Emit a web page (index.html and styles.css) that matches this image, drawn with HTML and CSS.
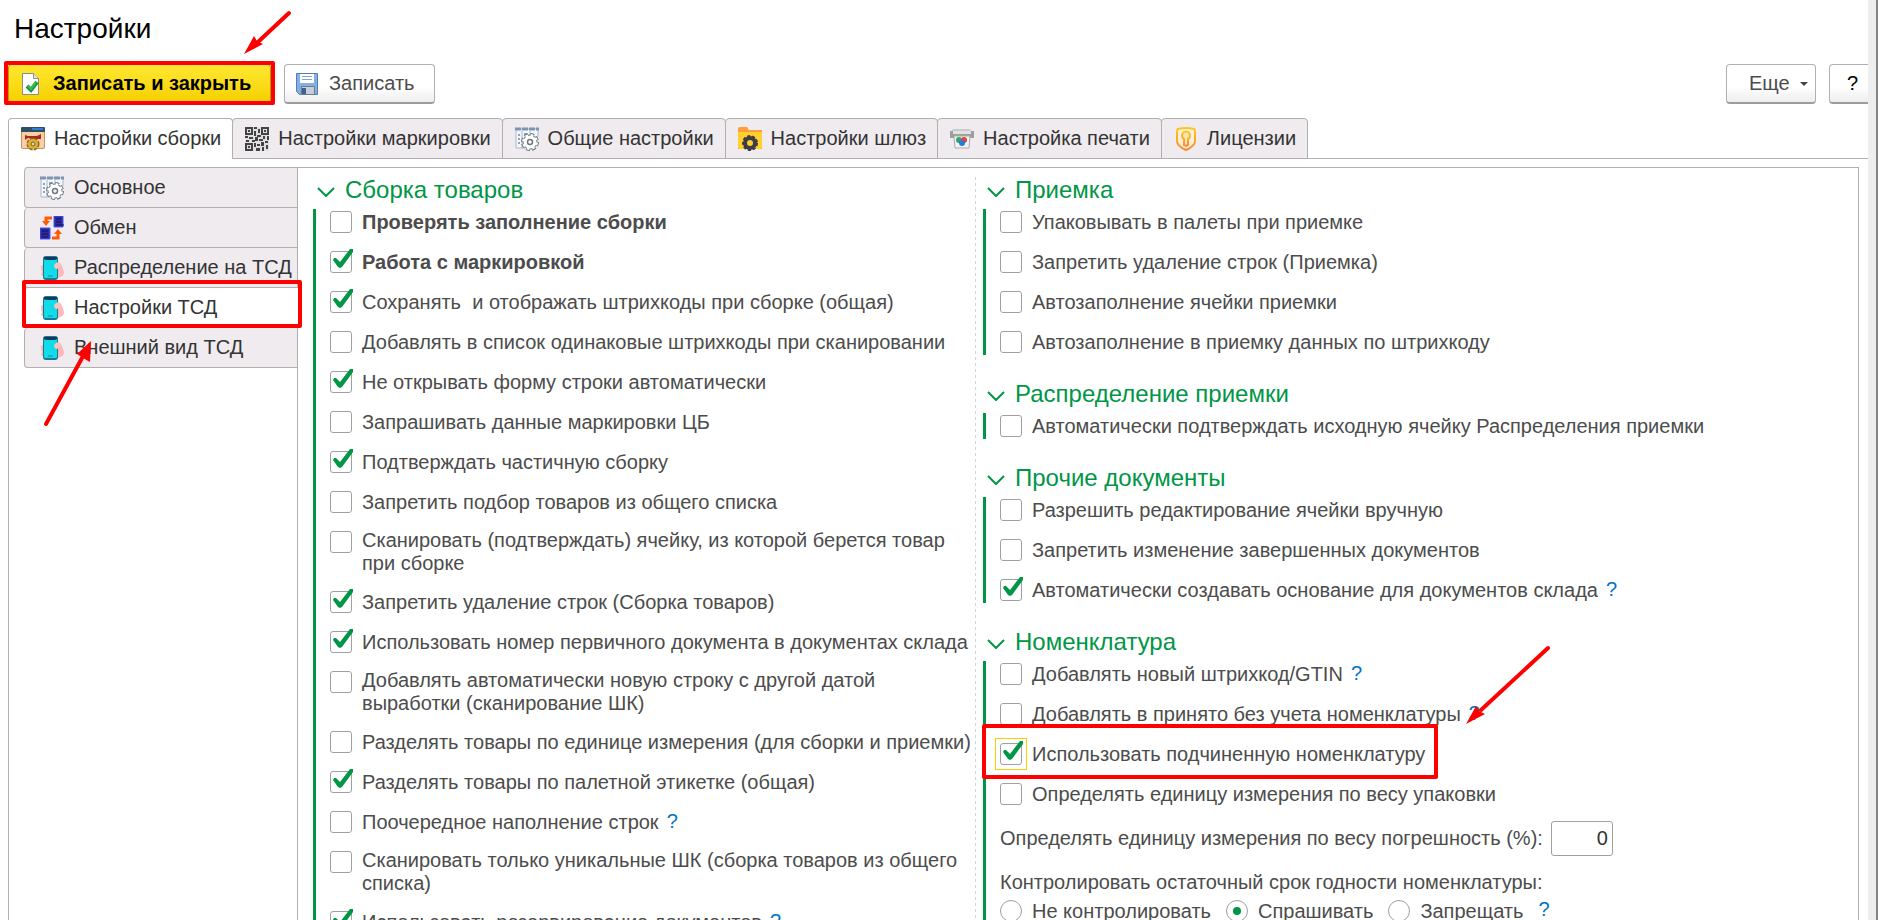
FILE: index.html
```html
<!DOCTYPE html>
<html lang="ru">

<head>
    <meta charset="UTF-8">
    <meta name="viewport" content="width=device-width, initial-scale=1.0">
    <title>Настройки</title>
    <link rel="stylesheet" href="styles.css">
</head>

<body>
    <!-- Общие иконки -->
    <svg width="0" height="0" class="sprite">
        <symbol id="icon-form" viewBox="0 0 24 24">
            <path d="M1 2h22v8H10v11H1z" fill="#f4f7fb" stroke="#a9b8cf" />
            <path d="M0 2h24" stroke="#7f93b5" stroke-width="3" stroke-dasharray="6 1" />
            <path d="M7 4v17M15 4v4" stroke="#a9b8cf" />
            <path d="M3 8h2M3 12h2M3 16h2M9 7h3" stroke="#8fa3bf" stroke-width="2" />
            <circle cx="15" cy="15" r="7" fill="none" stroke="#6e7780" stroke-width="4" stroke-dasharray="3.6 1.9" />
            <circle cx="15" cy="15" r="7" fill="#fff" stroke="#6e7780" stroke-width="1" />
            <circle cx="15" cy="15" r="7" fill="none" stroke="#fff" stroke-width="2" stroke-dasharray="2.6 2.9" stroke-dashoffset="-0.5" />
            <circle cx="15" cy="15" r="2.5" fill="#fff" stroke="#6e7780" stroke-width="1.5" />
        </symbol>
        <symbol id="icon-phone" viewBox="0 0 24 24">
            <path d="M1 10l3-2v13l-3-2 1-3-1-3z" fill="#fbb9b9" />
            <path d="M16 6q5 0 6 4l2 6q0 4-4 5l-4 2z" fill="#fbb9b9" />
            <rect x="3" y="0" width="15" height="24" rx="3" fill="#17798f" />
            <rect x="4" y="3" width="13" height="19" rx="1" fill="#12dcea" />
            <path d="M4 1h13v2l-2 1H6L4 3z" fill="#123a5c" />
            <path d="M8 20h5" stroke="#0b8fa5" />
            <path d="M14 9q3-4 6-2l1 3-4 3q-3 0-3-4z" fill="#fbc4c1" />
        </symbol>
        <symbol id="icon-chevron" viewBox="0 0 18 10">
            <path d="M1 1l8 8 8-8" fill="none" stroke="#009646" stroke-width="2" />
        </symbol>
    </svg>

    <div class="window">
        <h1>Настройки</h1>

        <div class="toolbar">
            <div class="marked">
                <button type="button" class="btn btn-primary">
                    <svg class="icon" viewBox="0 0 24 24">
                        <path d="M3.5 1.5h11l5 5v16h-16z" fill="#fff" stroke="#8a8f80" />
                        <path d="M14.500 1.500v5h5" fill="#e8e8e8" stroke="#8a8f80" />
                        <path d="M8 14l4 4 6-8" fill="none" stroke="#15953a" stroke-width="4" />
                        <path d="M9 14l3 3 5-7" fill="none" stroke="#35c04c" stroke-width="2" />
                    </svg>
                    Записать и закрыть
                </button>
                <span class="frame frame-save"></span>
                <svg class="arrow arrow-save" viewBox="0 0 48 46">
                    <path d="M45 4L14 33" stroke="#f00" stroke-width="4" stroke-linecap="round" />
                    <path d="M0 45L10 27l3 5 6 3z" fill="#f00" />
                </svg>
            </div>
            <button type="button" class="btn btn-write">
                <svg class="icon" viewBox="0 0 24 24">
                    <path d="M1.500 1.500h21v21h-18l-3-3z" fill="#86aede" stroke="#4d7fb8" />
                    <path d="M5 2h14v9H5z" fill="#fff" />
                    <path d="M7 4.500h10M7 7.500h10" stroke="#7fa5d2" />
                    <path d="M6.500 14.500h13v8h-13z" fill="#c9ced4" stroke="#6b7c92" />
                    <path d="M7 16h4v6H7z" fill="#3b6294" />
                </svg>
                Записать
            </button>
            <button type="button" class="btn btn-more">
                Еще
                <svg width="8" height="4" viewBox="0 0 8 4"><path d="M0 0h8L4 4z" fill="#444" /></svg>
            </button>
            <button type="button" class="btn btn-help">?</button>
        </div>

        <div class="tabs">
            <button type="button" class="tab active">
                <svg class="icon" viewBox="0 0 24 24">
                    <rect x="0" y="1" width="24" height="21" rx="2" fill="#c98f5c" />
                    <rect x="1" y="5" width="22" height="16" rx="1" fill="#f9cfa6" />
                    <rect x="0" y="0" width="24" height="5" rx="1" fill="#2f4f66" />
                    <path d="M11 2h11" stroke="#2f80c8" stroke-width="2" />
                    <path d="M4 8l3 1h9l4-2v5h-6l-7-1-3 2z" fill="#a82a1c" />
                    <circle cx="12" cy="17" r="5" fill="#e0b030" stroke="#8a6a1a" stroke-width="3" stroke-dasharray="3 1" />
                    <circle cx="12" cy="17" r="5" fill="#e0b030" />
                    <circle cx="12" cy="17" r="2" fill="#d9d4c8" stroke="#80601a" />
                </svg>
                Настройки сборки
            </button>
            <button type="button" class="tab">
                <svg class="icon" viewBox="0 0 24 24">
                    <path d="M0 0h24v24H0z" fill="#e2dfe2" />
                    <path d="M1 1h6v6H1zM17 1h6v6h-6zM1 17h6v6H1z" fill="none" stroke="#444" stroke-width="2" />
                    <path d="M3 3h2v2H3zM19 3h2v2h-2zM3 19h2v2H3zM9 0h3v2H9zM13 2h2v4h-2zM9 4h2v5H9zM0 9h3v2H0zM4 10h4v2H4zM12 8h4v2h-4zM18 9h2v3h-2zM22 9h2v4h-2zM1 13h3v2H1zM7 13h3v2H7zM10 10h3v4h-3zM14 12h4v2h-4zM9 16h2v4H9zM12 17h3v2h-3zM16 15h3v4h-3zM20 14h3v2h-3zM11 21h4v3h-4zM17 20h2v4h-2zM21 18h2v4h-2z" fill="#444" />
                </svg>
                Настройки маркировки
            </button>
            <button type="button" class="tab">
                <svg class="icon"><use href="#icon-form" /></svg>
                Общие настройки
            </button>
            <button type="button" class="tab">
                <svg class="icon" viewBox="0 0 24 24">
                    <path d="M0 2q0-2 2-2h7l2 3h13v19H0z" fill="#ff9f3c" />
                    <path d="M0 5h24v15q0 2-2 2H2q-2 0-2-2z" fill="#ffd02e" />
                    <circle cx="12" cy="16" r="7" fill="none" stroke="#3d3d45" stroke-width="2" stroke-dasharray="3 2" />
                    <circle cx="12" cy="16" r="5" fill="#ffd02e" stroke="#3d3d45" stroke-width="4" />
                </svg>
                Настройки шлюз
            </button>
            <button type="button" class="tab">
                <svg class="icon" viewBox="0 0 24 24">
                    <path d="M3 2h17l2 3H1z" fill="#c8cacb" />
                    <path d="M0 4h24v7H0z" fill="#9c9ea0" />
                    <path d="M3 4h18v3H3z" fill="#e0e2e3" />
                    <path d="M4 9h16l-1 12H5z" fill="#f3f3f3" stroke="#aaa" />
                    <circle cx="9" cy="13" r="3" fill="#2fa866" />
                    <circle cx="14" cy="13" r="3" fill="#e2453c" />
                    <circle cx="12" cy="16" r="3" fill="#2c78d8" />
                </svg>
                Настройка печати
            </button>
            <button type="button" class="tab">
                <svg class="icon" viewBox="0 0 24 24">
                    <defs>
                        <linearGradient id="gold" x1="0" y1="0" x2="0" y2="1">
                            <stop offset="0" stop-color="#fbc81e" />
                            <stop offset="1" stop-color="#fb8a3c" />
                        </linearGradient>
                    </defs>
                    <path d="M4 2q8-2 16 0 1 1 1 3v9q0 5-9 9-9-4-9-9V5q0-2 1-3z" fill="#fff0d8" stroke="url(#gold)" stroke-width="2" />
                    <path d="M10 12a4 4 0 1 1 4 0v6l-2 1-2-1z" fill="#ffe3b0" stroke="url(#gold)" stroke-width="2" />
                </svg>
                Лицензии
            </button>
        </div>

        <div class="page">
            <nav class="side">
                <button type="button" class="side-tab">
                    <svg class="icon"><use href="#icon-form" /></svg>
                    Основное
                </button>
                <button type="button" class="side-tab">
                    <svg class="icon" viewBox="0 0 24 24">
                        <path d="M14 0h9v11h-9zM0 12h10v11H0z" fill="#2d2a9c" stroke="#4a55ff" />
                        <path d="M16 3h5M16 6h5M16 9h8M2 15h6M2 18h6M2 21h6" stroke="#14124e" />
                        <path d="M12 2H6v5" fill="none" stroke="#ff5a0a" stroke-width="3" />
                        <path d="M2 5h8l-4 5z" fill="#ff5a0a" />
                        <path d="M12 22h6v-6" fill="none" stroke="#ff5a0a" stroke-width="3" />
                        <path d="M14 18h8l-4-5z" fill="#ff5a0a" />
                    </svg>
                    Обмен
                </button>
                <button type="button" class="side-tab">
                    <svg class="icon"><use href="#icon-phone" /></svg>
                    Распределение на ТСД
                </button>
                <div class="marked">
                    <button type="button" class="side-tab active">
                        <svg class="icon"><use href="#icon-phone" /></svg>
                        Настройки ТСД
                    </button>
                    <span class="frame frame-side"></span>
                    <svg class="arrow arrow-side" viewBox="0 0 50 88">
                        <path d="M4 84L40 18" stroke="#f00" stroke-width="4" stroke-linecap="round" />
                        <path d="M49 1L35 14l6 4 7 4z" fill="#f00" />
                    </svg>
                </div>
                <button type="button" class="side-tab">
                    <svg class="icon"><use href="#icon-phone" /></svg>
                    Внешний вид ТСД
                </button>
            </nav>

            <div class="column column-left">
                <section>
                    <h2><svg><use href="#icon-chevron" /></svg>Сборка товаров</h2>
                    <div class="group">
                        <label class="row bold"><input type="checkbox"><span>Проверять заполнение сборки</span></label>
                        <label class="row bold"><input type="checkbox" checked><span>Работа с маркировкой</span></label>
                        <label class="row"><input type="checkbox" checked><span>Сохранять&nbsp; и отображать штрихкоды при сборке (общая)</span></label>
                        <label class="row"><input type="checkbox"><span>Добавлять в список одинаковые штрихкоды при сканировании</span></label>
                        <label class="row"><input type="checkbox" checked><span>Не открывать форму строки автоматически</span></label>
                        <label class="row"><input type="checkbox"><span>Запрашивать данные маркировки ЦБ</span></label>
                        <label class="row"><input type="checkbox" checked><span>Подтверждать частичную сборку</span></label>
                        <label class="row"><input type="checkbox"><span>Запретить подбор товаров из общего списка</span></label>
                        <label class="row"><input type="checkbox"><span>Сканировать (подтверждать) ячейку, из которой берется товар<br>при сборке</span></label>
                        <label class="row"><input type="checkbox" checked><span>Запретить удаление строк (Сборка товаров)</span></label>
                        <label class="row"><input type="checkbox" checked><span>Использовать номер первичного документа в документах склада</span></label>
                        <label class="row"><input type="checkbox"><span>Добавлять автоматически новую строку с другой датой<br>выработки (сканирование ШК)</span></label>
                        <label class="row"><input type="checkbox"><span>Разделять товары по единице измерения (для сборки и приемки)</span></label>
                        <label class="row"><input type="checkbox" checked><span>Разделять товары по палетной этикетке (общая)</span></label>
                        <div class="row">
                            <label class="row"><input type="checkbox"><span>Поочередное наполнение строк</span></label>
                            <a href="#" class="hint">?</a>
                        </div>
                        <label class="row"><input type="checkbox"><span>Сканировать только уникальные ШК (сборка товаров из общего<br>списка)</span></label>
                        <div class="row">
                            <label class="row"><input type="checkbox" checked><span>Использовать резервирование документов</span></label>
                            <a href="#" class="hint">?</a>
                        </div>
                    </div>
                </section>
            </div>

            <div class="divider"></div>

            <div class="column">
                <section>
                    <h2><svg><use href="#icon-chevron" /></svg>Приемка</h2>
                    <div class="group">
                        <label class="row"><input type="checkbox"><span>Упаковывать в палеты при приемке</span></label>
                        <label class="row"><input type="checkbox"><span>Запретить удаление строк (Приемка)</span></label>
                        <label class="row"><input type="checkbox"><span>Автозаполнение ячейки приемки</span></label>
                        <label class="row"><input type="checkbox"><span>Автозаполнение в приемку данных по штрихкоду</span></label>
                    </div>
                </section>
                <section>
                    <h2><svg><use href="#icon-chevron" /></svg>Распределение приемки</h2>
                    <div class="group">
                        <label class="row"><input type="checkbox"><span>Автоматически подтверждать исходную ячейку Распределения приемки</span></label>
                    </div>
                </section>
                <section>
                    <h2><svg><use href="#icon-chevron" /></svg>Прочие документы</h2>
                    <div class="group">
                        <label class="row"><input type="checkbox"><span>Разрешить редактирование ячейки вручную</span></label>
                        <label class="row"><input type="checkbox"><span>Запретить изменение завершенных документов</span></label>
                        <div class="row">
                            <label class="row"><input type="checkbox" checked><span>Автоматически создавать основание для документов склада</span></label>
                            <a href="#" class="hint">?</a>
                        </div>
                    </div>
                </section>
                <section>
                    <h2><svg><use href="#icon-chevron" /></svg>Номенклатура</h2>
                    <div class="group">
                        <div class="row">
                            <label class="row"><input type="checkbox"><span>Добавлять новый штрихкод/GTIN</span></label>
                            <a href="#" class="hint">?</a>
                        </div>
                        <div class="row">
                            <label class="row"><input type="checkbox"><span>Добавлять в принято без учета номенклатуры</span></label>
                            <a href="#" class="hint">?</a>
                        </div>
                        <div class="marked">
                            <label class="row"><input type="checkbox" class="focused" checked><span>Использовать подчиненную номенклатуру</span></label>
                            <span class="frame frame-item"></span>
                            <svg class="arrow arrow-item" viewBox="0 0 88 82">
                                <path d="M82 4L15 66" stroke="#f00" stroke-width="4" stroke-linecap="round" />
                                <path d="M0 80l10-18 3 5 6 3z" fill="#f00" />
                            </svg>
                        </div>
                        <label class="row"><input type="checkbox"><span>Определять единицу измерения по весу упаковки</span></label>
                        <div class="field">
                            <label for="tolerance">Определять единицу измерения по весу погрешность (%):</label>
                            <input type="text" id="tolerance" value="0">
                        </div>
                        <fieldset>
                            <legend>Контролировать остаточный срок годности номенклатуры:</legend>
                            <div class="radios">
                                <label class="row"><input type="radio" name="shelf"><span>Не контролировать</span></label>
                                <label class="row"><input type="radio" name="shelf" checked><span>Спрашивать</span></label>
                                <label class="row"><input type="radio" name="shelf"><span>Запрещать</span></label>
                                <a href="#" class="hint">?</a>
                            </div>
                        </fieldset>
                    </div>
                </section>
            </div>
        </div>
    </div>
</body>

</html>
```
FILE: styles.css
```css
* {
    box-sizing: border-box;
}

body {
    margin: 0;
    height: 100vh;
    overflow: hidden;
    background-color: #fff;
    border-right: 2px solid #848484;
    font-family: "Liberation Sans", Arial, sans-serif;
    font-size: 20px;
    line-height: 23px;
    color: #4c4c4c;
    white-space: nowrap;
}

.sprite {
    position: absolute;
}

.window {
    height: 100%;
    display: flex;
    flex-direction: column;
    overflow: hidden;
    padding-left: 8px;
    border-right: 8px solid #eee;
}

h1 {
    margin: 13px 0 19px 6px;
    font-size: 28px;
    line-height: 32px;
    font-weight: normal;
    color: #000;
}

button {
    font: inherit;
    color: inherit;
    white-space: nowrap;
    cursor: pointer;
}

.icon {
    width: 24px;
    height: 24px;
    flex: none;
}

/* Командная панель */
.toolbar {
    display: flex;
    gap: 13px;
    flex: none;
    margin-right: -21px;
}

.btn {
    display: flex;
    align-items: center;
    gap: 10px;
    height: 40px;
    padding: 0 10px;
    border: 1px solid #b0b0b0;
    border-bottom: 2px solid #9c9c9c;
    border-radius: 4px;
    background: linear-gradient(#fff 60%, #efedef);
}

.btn-primary {
    width: 263px;
    border-color: #b89b00;
    background: linear-gradient(#ffe832, #f5d000);
    font-weight: bold;
    color: #000;
}

.btn-write {
    width: 151px;
}

.btn-more {
    width: 90px;
    margin-left: auto;
    padding-left: 22px;
}

.btn-more svg {
    flex: none;
}

.btn-help {
    width: 60px;
    padding-left: 17px;
    color: #000;
}

/* Закладки */
.tabs {
    display: flex;
    flex: none;
    margin-top: 14px;
    border-bottom: 1px solid #b0b0b0;
}

.tab {
    display: flex;
    align-items: center;
    gap: 9px;
    height: 41px;
    margin: 0 -1px -1px 0;
    padding: 0 11px 0 12px;
    border: 1px solid #b0b0b0;
    border-radius: 4px 4px 0 0;
    background-color: #efebef;
    color: #333;
}

.tab.active {
    border-bottom-color: #fff;
    background-color: #fff;
}

.page {
    display: flex;
    flex: 1;
    min-height: 0;
    padding: 8px 9px 0 15px;
    border-left: 1px solid #b0b0b0;
}

.side {
    width: 274px;
    flex: none;
    border-top: 1px solid #b0b0b0;
    border-right: 1px solid #b0b0b0;
    border-top-left-radius: 4px;
}

.side-tab {
    display: flex;
    align-items: center;
    gap: 10px;
    width: 273px;
    height: 40px;
    padding: 0 0 0 15px;
    border: solid #b0b0b0;
    border-width: 0 0 1px 1px;
    border-radius: 4px 0 0 4px;
    background-color: #efebef;
    color: #333;
}

.side-tab.active {
    width: 274px;
    background-color: #fff;
}

/* Колонки с настройками */
.column {
    flex: 1;
    min-width: 0;
    padding: 5px 0 0 7px;
    border-top: 1px solid #b0b0b0;
    border-right: 1px solid #b0b0b0;
}

.column-left {
    flex: none;
    width: 677px;
    padding-left: 15px;
    border-right: none;
}

.divider {
    width: 1px;
    flex: none;
    border-top: 1px solid #b0b0b0;
    background: repeating-linear-gradient(#d4d4d4 0 3px, #fff 3px 6px) 0 9px no-repeat;
}

section {
    margin-bottom: 22px;
}

h2 {
    display: flex;
    align-items: center;
    gap: 10px;
    margin: 0;
    padding: 0 0 2px 4px;
    font-size: 24px;
    line-height: 34px;
    font-weight: normal;
    color: #009646;
}

h2 svg {
    width: 18px;
    height: 10px;
    margin-top: 4px;
}

.group {
    display: flex;
    flex-direction: column;
    gap: 14px;
    padding-left: 14px;
    border-left: 3px solid #009646;
}

.row {
    display: flex;
    align-items: center;
    gap: 10px;
    min-height: 26px;
}

.bold {
    font-weight: bold;
}

input[type="checkbox"],
input[type="radio"] {
    appearance: none;
    position: relative;
    align-self: flex-start;
    flex: none;
    width: 22px;
    height: 22px;
    margin: 2px 0;
    border: 1px solid #a0a0a0;
    border-radius: 3px;
    background-color: #fff;
}

input[type="checkbox"]:checked::after {
    content: "";
    position: absolute;
    top: -3px;
    left: 2px;
    width: 20px;
    height: 19px;
    background-color: #009646;
    clip-path: polygon(0 11px, 1px 9px, 3px 9px, 7px 13px, 17px 0, 20px 0, 20px 3px, 9px 18px, 7px 19px, 5px 18px);
}

.focused::before {
    content: "";
    position: absolute;
    inset: -6px;
    border: 1px solid #ffcc00;
}

input[type="radio"] {
    border-radius: 50%;
}

input[type="radio"]:checked::after {
    content: "";
    position: absolute;
    top: 6px;
    left: 6px;
    width: 8px;
    height: 8px;
    border-radius: 50%;
    background-color: #009646;
}

.hint {
    padding-bottom: 2px;
    color: #0073c6;
    text-decoration: none;
}

.row .hint {
    margin-left: -2px;
}

.field {
    display: flex;
    align-items: center;
    gap: 8px;
}

.field input {
    width: 62px;
    height: 35px;
    padding: 0 4px;
    border: 1px solid #a0a0a0;
    border-radius: 3px;
    font: inherit;
    color: #333;
    text-align: right;
}

fieldset {
    margin: 0;
    padding: 0;
    border: none;
}

legend {
    padding: 0;
    line-height: 24px;
}

.radios {
    display: flex;
    gap: 15px;
    padding-top: 4px;
}

/* Красные пометки поверх формы */
.marked {
    position: relative;
}

.frame {
    position: absolute;
    border: 4px solid #f00;
    border-radius: 2px;
    pointer-events: none;
}

.frame-save {
    inset: -3px -4px -1px -4px;
}

.frame-side {
    inset: -8px -5px 0 -2px;
    z-index: 1;
}

.frame-item {
    top: -17px;
    left: -18px;
    width: 456px;
    height: 55px;
}

.arrow {
    position: absolute;
    fill: none;
    pointer-events: none;
    z-index: 1;
}

.arrow-save {
    top: -55px;
    left: 236px;
    width: 48px;
    height: 46px;
}

.arrow-side {
    top: 52px;
    left: 18px;
    width: 50px;
    height: 88px;
}

.arrow-item {
    top: -97px;
    left: 466px;
    width: 88px;
    height: 82px;
}
```
